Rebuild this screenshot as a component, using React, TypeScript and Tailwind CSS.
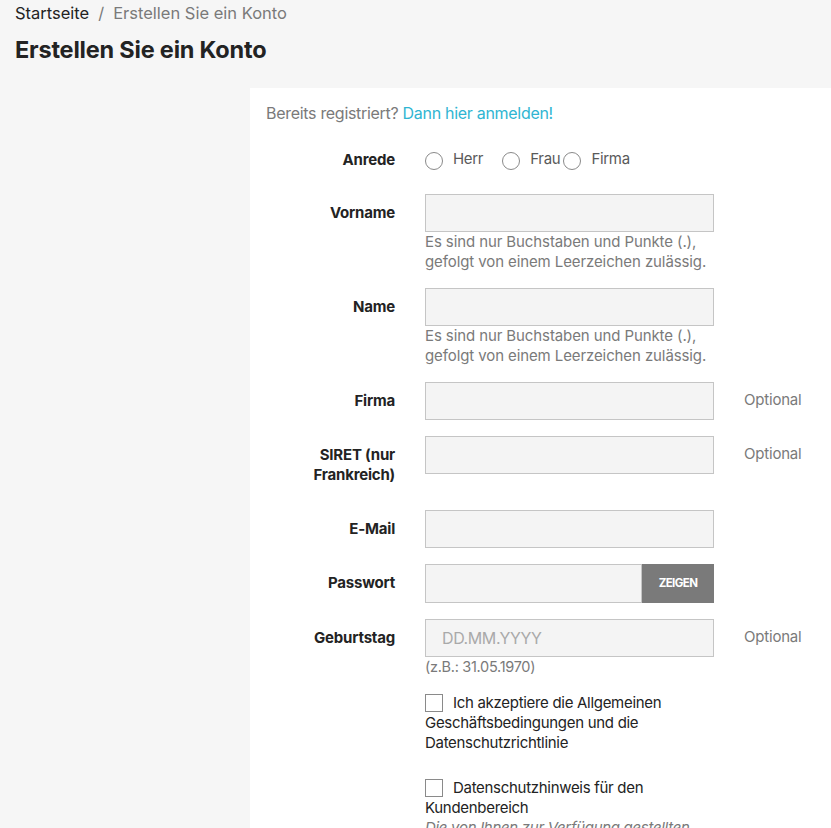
import React from "react";

const font = { fontFamily: "Inter, 'Noto Sans', sans-serif" };

function Label({ children }: { children: React.ReactNode }) {
  return (
    <div className="w-[145px] shrink-0 pt-[9px] text-right text-[15px] leading-[20px] font-bold text-[#232323] tracking-[-0.2px]">
      {children}
    </div>
  );
}

function Field({ className = "" }: { className?: string }) {
  return (
    <div className={`h-[38px] w-[289px] border border-[#c5c5c5] bg-[#f4f4f4] ${className}`} />
  );
}

function Optional() {
  return (
    <div className="ml-[30px] pt-[8px] text-[15px] leading-[20px] text-[#7a7a7a] tracking-[-0.2px]">Optional</div>
  );
}

function Helper({ children, className = "text-[15px] tracking-[-0.1px]" }: { children: React.ReactNode; className?: string }) {
  return <div className={`leading-[20px] text-[#7a7a7a] ${className}`}>{children}</div>;
}

function Radio({ label, gap }: { label: string; gap: string }) {
  return (
    <div className={`flex items-center ${gap}`}>
      <span className="mt-[4px] h-[18px] w-[18px] rounded-full border border-[#8a8a8a] bg-white" />
      <span className="ml-[10px] text-[15px] leading-[20px] text-[#5a5a5a] tracking-[-0.3px]">{label}</span>
    </div>
  );
}

export default function App() {
  return (
    <div className="min-h-[828px] bg-[#f6f6f6]" style={font}>
      <div className="px-[15px] pt-[2px]">
        <div className="flex items-center text-[16.5px] leading-[22px] tracking-[0px]">
          <span className="text-[#232323]">Startseite</span>
          <span className="mx-[9px] text-[#7a7a7a]">/</span>
          <span className="text-[#7a7a7a]">Erstellen Sie ein Konto</span>
        </div>
        <h1 className="mt-[11px] text-[23.5px] leading-[30px] font-bold text-[#232323] tracking-[-0.2px]">
          Erstellen Sie ein Konto
        </h1>
      </div>

      <div className="mt-[23px] flex">
        <div className="w-[250px] shrink-0" />
        <div className="flex-1 bg-white pb-[40px]">
          <div className="pl-[16px] pt-[13px] text-[16px] leading-[24px] tracking-[-0.3px] text-[#7a7a7a]">
            Bereits registriert? <span className="text-[#2fb5d2]">Dann hier anmelden!</span>
          </div>

          {/* Anrede */}
          <div className="mt-[23px] flex">
            <div className="w-[145px] shrink-0 pt-[2px] text-right text-[15px] leading-[20px] font-bold text-[#232323] tracking-[-0.2px]">
              Anrede
            </div>
            <div className="ml-[30px] flex">
              <Radio label="Herr" gap="" />
              <Radio label="Frau" gap="ml-[19px]" />
              <Radio label="Firma" gap="ml-[3px]" />
            </div>
          </div>

          {/* Vorname */}
          <div className="mt-[24px] flex">
            <Label>Vorname</Label>
            <div className="ml-[30px]">
              <Field />
              <Helper>
                Es sind nur Buchstaben und Punkte (.),
                <br />
                gefolgt von einem Leerzeichen zulässig.
              </Helper>
            </div>
          </div>

          {/* Name */}
          <div className="mt-[16px] flex">
            <Label>Name</Label>
            <div className="ml-[30px]">
              <Field />
              <Helper>
                Es sind nur Buchstaben und Punkte (.),
                <br />
                gefolgt von einem Leerzeichen zulässig.
              </Helper>
            </div>
          </div>

          {/* Firma */}
          <div className="mt-[16px] flex">
            <Label>Firma</Label>
            <div className="ml-[30px]">
              <Field />
            </div>
            <Optional />
          </div>

          {/* SIRET */}
          <div className="mt-[16px] flex">
            <Label>
              SIRET (nur
              <br />
              Frankreich)
            </Label>
            <div className="ml-[30px]">
              <Field />
            </div>
            <Optional />
          </div>

          {/* E-Mail */}
          <div className="mt-[25px] flex">
            <Label>E-Mail</Label>
            <div className="ml-[30px]">
              <Field />
            </div>
          </div>

          {/* Passwort */}
          <div className="mt-[16px] flex">
            <Label>Passwort</Label>
            <div className="ml-[30px] flex h-[39px] w-[289px]">
              <div className="flex-1 border border-[#c5c5c5] bg-[#f4f4f4]" />
              <div className="flex w-[72px] items-center justify-center bg-[#7a7a7a] text-[11.5px] font-bold text-white tracking-[-0.6px]">
                ZEIGEN
              </div>
            </div>
          </div>

          {/* Geburtstag */}
          <div className="mt-[16px] flex">
            <Label>Geburtstag</Label>
            <div className="ml-[30px]">
              <div className="flex h-[38px] w-[289px] items-center border border-[#c5c5c5] bg-[#f4f4f4] pl-[16px] text-[16px] text-[#a9a9a9] tracking-[-0.4px]">
                DD.MM.YYYY
              </div>
              <Helper className="text-[14.5px] tracking-[-0.3px]">(z.B.: 31.05.1970)</Helper>
            </div>
            <Optional />
          </div>

          {/* Checkbox 1 */}
          <div className="mt-[13px] flex">
            <div className="w-[145px] shrink-0" />
            <div className="ml-[30px] w-[289px] text-[15px] leading-[20px] text-[#232323] tracking-[-0.3px]">
              <span className="mr-[10px] inline-block h-[18px] w-[18px] translate-y-[4px] border border-[#8a8a8a] bg-white align-baseline" />
              Ich akzeptiere die Allgemeinen Geschäftsbedingungen und die Datenschutzrichtlinie
            </div>
          </div>

          {/* Checkbox 2 */}
          <div className="mt-[22px] flex">
            <div className="w-[145px] shrink-0" />
            <div className="ml-[30px] w-[289px] text-[15px] leading-[20px] text-[#232323] tracking-[-0.3px]">
              <span className="mr-[10px] inline-block h-[18px] w-[18px] translate-y-[4px] border border-[#8a8a8a] bg-white align-baseline" />
              Datenschutzhinweis für den Kundenbereich
              <div className="italic text-[#7a7a7a]">
                Die von Ihnen zur Verfügung gestellten personenbezogenen Daten
              </div>
            </div>
          </div>
        </div>
      </div>
    </div>
  );
}
